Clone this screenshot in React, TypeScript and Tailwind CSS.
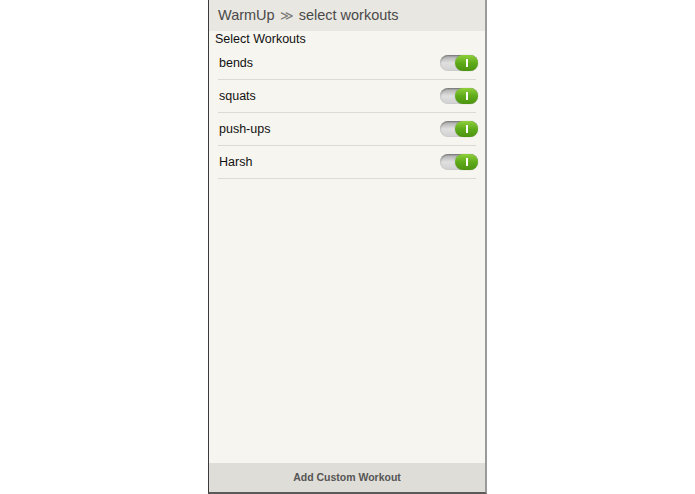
import React from "react";

function Toggle() {
  return (
    <div className="relative -mr-[2px] h-[16px] w-[38px] rounded-full bg-gradient-to-b from-[#a9a9a9] via-[#e0e0e0] to-[#d0d0d0] shadow-[inset_0_1px_2px_rgba(0,0,0,0.35)]">
      <div className="absolute right-0 top-0 flex h-[16px] w-[23px] items-center justify-center rounded-full bg-gradient-to-b from-[#8fd03a] via-[#5fab1a] to-[#4c9410] shadow-[0_0_1px_rgba(0,0,0,0.4)]">
        <div className="h-[8px] w-[2px] bg-white" />
      </div>
    </div>
  );
}

const items = ["bends", "squats", "push-ups", "Harsh"];

export default function App() {
  return (
    <div
      className="flex h-[494px] w-[695px] justify-start bg-white"
      style={{ fontFamily: '"Liberation Sans", Arial, sans-serif' }}
    >
      <div className="ml-[208px] flex h-[494px] w-[279px] flex-col border-l-[1.5px] border-r-2 border-b-2 border-l-[#3a3a3a] border-r-[#9a9a9a] border-b-[#5a5a5a] bg-[#f7f5ef]">
        <div className="flex h-[31px] shrink-0 items-center bg-[#e9e7e1] pl-[9px] text-[14.5px] text-[#4a4a4a]">
          <span>WarmUp</span>
          <span className="ml-[5px] mr-[5px] text-[13px] text-[#777]">≫</span>
          <span>select workouts</span>
        </div>
        <div className="flex-1">
          <div className="pl-[6px] pt-[1px] text-[12.5px] leading-[15px] text-[#111]">Select Workouts</div>
          <div className="px-[9px]">
            {items.map((it) => (
              <div
                key={it}
                className="flex h-[33px] items-center justify-between border-b border-[#dcdad3]"
              >
                <span className="pl-[1px] text-[12.5px] text-[#111]">{it}</span>
                <Toggle />
              </div>
            ))}
          </div>
        </div>
        <div className="flex h-[29px] shrink-0 items-center justify-center bg-[#dfddd7] text-[10.5px] font-bold text-[#555]">
          Add Custom Workout
        </div>
      </div>
    </div>
  );
}
